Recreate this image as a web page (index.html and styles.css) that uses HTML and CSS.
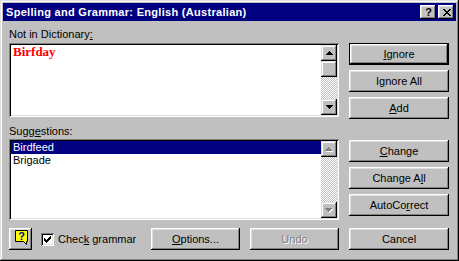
FILE: index.html
```html
<!DOCTYPE html>
<html>
<head>
    <meta charset="utf-8">
    <title>Spelling and Grammar</title>
    <link rel="stylesheet" href="styles.css">
</head>
<body>
    <div class="window">
        <div class="titlebar">
            <span class="title">Spelling and Grammar: English (Australian)</span>
            <div class="caption-buttons">
                <span class="cap-btn">?</span>
                <span class="cap-btn">
                    <svg width="8" height="7" viewBox="0 0 8 7"><path d="M0 0h2v1h-2z M6 0h2v1h-2z M1 1h2v1h-2z M5 1h2v1h-2z M2 2h4v1h-4z M3 3h2v1h-2z M2 4h4v1h-4z M1 5h2v1h-2z M5 5h2v1h-2z M0 6h2v1h-2z M6 6h2v1h-2z" fill="#000"/></svg>
                </span>
            </div>
        </div>

        <div class="dialog">
            <div class="label lbl-dict">Not in Dictionary<u>:</u></div>

            <div class="field textbox">
                <div class="text-area"><span class="misspelt">Birfday</span></div>
                <div class="scrollbar">
                    <div class="sb-btn">
                        <svg width="7" height="4" viewBox="0 0 7 4"><path d="M3 0h1v1h-1z M2 1h3v1h-3z M1 2h5v1h-5z M0 3h7v1h-7z" fill="#000"/></svg>
                    </div>
                    <div class="sb-btn sb-thumb"></div>
                    <div class="sb-track"></div>
                    <div class="sb-btn">
                        <svg width="7" height="4" viewBox="0 0 7 4"><path d="M0 0h7v1h-7z M1 1h5v1h-5z M2 2h3v1h-3z M3 3h1v1h-1z" fill="#000"/></svg>
                    </div>
                </div>
            </div>

            <div class="btn-stack stack-top">
                <button class="btn default"><u>I</u>gnore</button>
                <button class="btn">I<u>g</u>nore All</button>
                <button class="btn"><u>A</u>dd</button>
            </div>

            <div class="label lbl-sugg">Sugg<u>e</u>stions:</div>

            <div class="field listbox">
                <ul class="items">
                    <li class="selected">Birdfeed</li>
                    <li>Brigade</li>
                </ul>
                <div class="scrollbar">
                    <div class="sb-btn">
                        <svg width="8" height="5" viewBox="0 0 8 5"><path transform="translate(1 1)" d="M3 0h1v1h-1z M2 1h3v1h-3z M1 2h5v1h-5z M0 3h7v1h-7z" fill="#fff"/><path d="M3 0h1v1h-1z M2 1h3v1h-3z M1 2h5v1h-5z M0 3h7v1h-7z" fill="#808080"/></svg>
                    </div>
                    <div class="sb-track"></div>
                    <div class="sb-btn">
                        <svg width="8" height="5" viewBox="0 0 8 5"><path transform="translate(1 1)" d="M0 0h7v1h-7z M1 1h5v1h-5z M2 2h3v1h-3z M3 3h1v1h-1z" fill="#fff"/><path d="M0 0h7v1h-7z M1 1h5v1h-5z M2 2h3v1h-3z M3 3h1v1h-1z" fill="#808080"/></svg>
                    </div>
                </div>
            </div>

            <div class="btn-stack stack-low">
                <button class="btn"><u>C</u>hange</button>
                <button class="btn">Change A<u>l</u>l</button>
                <button class="btn">AutoCo<u>r</u>rect</button>
            </div>

            <div class="footer">
                <button class="btn help-btn">
                    <svg width="14" height="15" viewBox="0 0 14 15">
                        <path d="M0.5 0.5 H12.5 V11.5 H11.5 V14.5 L8.5 11.5 H0.5 Z" fill="#ffff00" stroke="#000"/>
                        <text x="6.5" y="10" text-anchor="middle" font-family="Liberation Sans, sans-serif" font-weight="bold" font-size="11" fill="#000080">?</text>
                    </svg>
                </button>
                <label class="check">
                    <span class="checkbox">
                        <svg width="7" height="7" viewBox="0 0 7 7"><path d="M6 0h1v1h-1z M5 1h2v1h-2z M0 2h1v1h-1z M4 2h3v1h-3z M0 3h2v1h-2z M3 3h3v1h-3z M0 4h5v1h-5z M1 5h3v1h-3z M2 6h1v1h-1z" fill="#000"/></svg>
                    </span>
                    <span>Chec<u>k</u> grammar</span>
                </label>
                <button class="btn options"><u>O</u>ptions...</button>
                <button class="btn undo" disabled>Undo</button>
            </div>

            <button class="btn cancel">Cancel</button>
        </div>
    </div>
</body>
</html>
```

FILE: styles.css
```css
* {
    box-sizing: border-box;
}

body {
    margin: 0;
    font-family: "Liberation Sans", Arial, sans-serif;
    font-size: 11px;
    line-height: 13px;
    color: #000;
}

.window {
    width: 459px;
    height: 261px;
    padding: 3px;
    background: #c0c0c0;
    box-shadow: inset -1px -1px #000, inset 1px 1px #dfdfdf, inset -2px -2px #808080, inset 2px 2px #fff;
}

/* title bar */
.titlebar {
    height: 18px;
    background: #000080;
    display: flex;
    align-items: center;
    justify-content: space-between;
    padding: 0 2px 0 3px;
}

.title {
    color: #fff;
    font-weight: bold;
    letter-spacing: 0.3px;
    line-height: 18px;
}

.caption-buttons {
    display: flex;
    gap: 2px;
}

.cap-btn {
    width: 16px;
    height: 14px;
    display: flex;
    align-items: center;
    justify-content: center;
    background: #c0c0c0;
    font-weight: bold;
    font-size: 11px;
    line-height: 14px;
    padding-left: 1px;
    box-shadow: inset -1px -1px #000, inset 1px 1px #fff, inset -2px -2px #808080, inset 2px 2px #dfdfdf;
}

/* dialog body */
.dialog {
    display: grid;
    grid-template-columns: 330px 100px;
    column-gap: 10px;
    grid-template-areas:
        "lbl1 ."
        "field1 btns1"
        "lbl2 ."
        "list btns2"
        "foot cancel";
    align-items: start;
    padding: 7px 0 0 6px;
}

.label {
    height: 13px;
}

.lbl-dict {
    grid-area: lbl1;
    margin-bottom: 2px;
}

.lbl-sugg {
    grid-area: lbl2;
    margin-top: 6px;
    margin-bottom: 1px;
}

.field {
    display: flex;
    padding: 2px;
    background: #fff;
    box-shadow: inset 1px 1px #808080, inset -1px -1px #fff, inset 2px 2px #000, inset -2px -2px #dfdfdf;
}

.textbox {
    grid-area: field1;
    height: 74px;
}

.listbox {
    grid-area: list;
    height: 81px;
}

.text-area {
    flex: 1;
    padding-left: 2px;
}

.misspelt {
    font-family: "Liberation Serif", "Times New Roman", serif;
    font-weight: bold;
    font-size: 13px;
    color: #ff0000;
}

.items {
    flex: 1;
    list-style: none;
    margin: 0;
    padding: 0;
}

.items li {
    height: 13px;
    padding-left: 2px;
}

.items .selected {
    background: #000080;
    color: #fff;
}

/* scrollbars */
.scrollbar {
    width: 16px;
    display: flex;
    flex-direction: column;
}

.sb-btn {
    height: 16px;
    flex: none;
    display: flex;
    align-items: center;
    justify-content: center;
    background: #c0c0c0;
    box-shadow: inset -1px -1px #000, inset 1px 1px #dfdfdf, inset -2px -2px #808080, inset 2px 2px #fff;
}

.sb-track {
    flex: 1;
    background: repeating-conic-gradient(#c0c0c0 0 25%, #fff 0 50%) 0 0 / 2px 2px;
}

/* buttons */
.btn {
    font: inherit;
    color: #000;
    height: 22px;
    padding: 0;
    border: none;
    background: #c0c0c0;
    box-shadow: inset -1px -1px #000, inset 1px 1px #fff, inset -2px -2px #808080, inset 2px 2px #dfdfdf;
}

.btn.default {
    box-shadow: inset 0 0 0 1px #000, inset -2px -2px #000, inset 2px 2px #fff, inset -3px -3px #808080, inset 3px 3px #dfdfdf;
}

.btn-stack {
    display: flex;
    flex-direction: column;
    gap: 5px;
}

.stack-top {
    grid-area: btns1;
}

.stack-low {
    grid-area: btns2;
    margin-top: 1px;
}

.footer {
    grid-area: foot;
    display: flex;
    align-items: center;
    margin-top: 8px;
    height: 22px;
}

.help-btn {
    width: 23px;
    display: flex;
    align-items: center;
    justify-content: center;
    padding: 0 0 3px 3px;
}

.help-btn svg {
    display: block;
}

.check {
    display: flex;
    align-items: center;
    gap: 4px;
    margin-left: 9px;
}

.checkbox {
    width: 13px;
    height: 13px;
    display: flex;
    align-items: center;
    justify-content: center;
    background: #fff;
    box-shadow: inset 1px 1px #808080, inset -1px -1px #fff, inset 2px 2px #000, inset -2px -2px #dfdfdf;
}

.options {
    width: 89px;
    margin-left: auto;
}

.undo {
    width: 89px;
    margin-left: 10px;
    color: #808080;
    text-shadow: 1px 1px 0 #fff;
}

.cancel {
    grid-area: cancel;
    margin-top: 8px;
}
```
